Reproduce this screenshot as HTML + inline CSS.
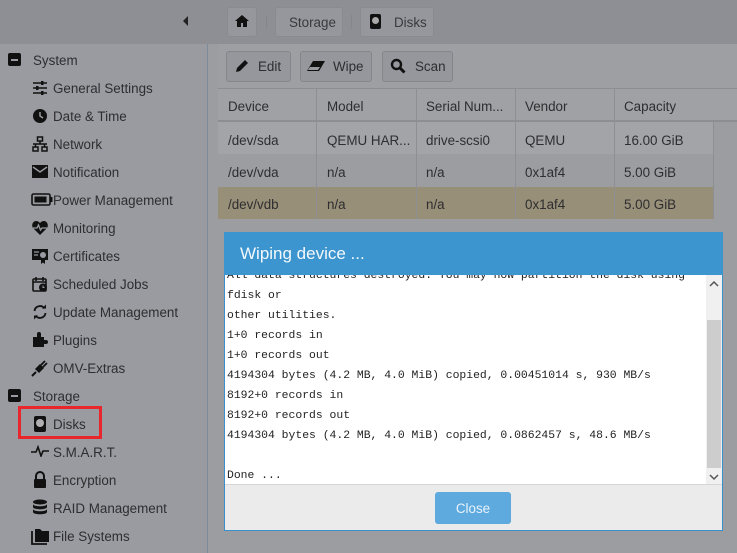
<!DOCTYPE html><html><head><meta charset="utf-8"><style>
*{margin:0;padding:0;box-sizing:border-box}
body{width:737px;height:553px;overflow:hidden;background:#9a9ba0;font-family:"Liberation Sans",sans-serif;font-size:13.4px;color:#2e2e30;position:relative}
.a{position:absolute}
.top{left:0;top:0;width:737px;height:44px;background:#8e8f94}
.side{left:0;top:44px;width:208px;height:509px;background:#9a9ba0;border-right:1px solid #7e8a98}
.it{position:absolute;left:53px;height:20px;line-height:20px;white-space:nowrap;margin-top:1px}
.crumb{top:7px;height:30px;background:#96979c;border:1px solid #8a8b90;border-radius:3px;line-height:30px}
.btn{top:51px;height:31px;background:#96979c;border:1px solid #85868a;border-radius:3px;line-height:30px}
.cell{position:absolute;line-height:20px;white-space:nowrap;margin-top:1px}
.mono{font-family:"Liberation Mono",monospace;font-size:11.4px;color:#222;white-space:pre;position:absolute;left:227px;line-height:20px}
</style></head><body>
<div class="a top"></div>
<div class="a" style="left:183px;top:16px;width:0;height:0;border-top:5px solid transparent;border-bottom:5px solid transparent;border-right:5px solid #222"></div>
<div class="a side"></div>
<div class="a" style="left:208px;top:44px;width:529px;height:509px;background:#9c9da1"></div>
<div class="a crumb" style="left:227px;width:30px"></div>
<svg class="a" style="left:235px;top:14px" width="14" height="14" viewBox="0 0 14 14"><path d="M7 1L0 7h2v6h4V9h2v4h4V7h2z" fill="#111"/></svg>
<div class="a" style="left:266px;top:15px;width:1px;height:14px;background:#85868a"></div>
<div class="a crumb" style="left:275px;width:68px;padding-left:13px;color:#3a3a3c">Storage</div>
<div class="a" style="left:351px;top:15px;width:1px;height:14px;background:#85868a"></div>
<div class="a crumb" style="left:360px;width:74px;padding-left:33px;color:#3a3a3c">Disks</div>
<div class="a" style="left:370px;top:14px;width:11px;height:15px;background:#111;border-radius:2px"></div>
<div class="a" style="left:372px;top:17px;width:7px;height:7px;border-radius:50%;background:#aaa"></div>
<div class="a" style="left:218px;top:44px;width:519px;height:45px;background:#9e9fa3"></div>
<div class="a btn" style="left:226px;width:65px;padding-left:31px">Edit</div>
<svg class="a" style="left:234px;top:58px" width="16" height="16" viewBox="0 0 16 16"><path d="M2 14l1-4 8-8 3 3-8 8z" fill="#111"/></svg>
<div class="a btn" style="left:300px;width:72px;padding-left:32px">Wipe</div>
<svg class="a" style="left:307px;top:60px" width="19" height="12" viewBox="0 0 19 12"><path d="M6 1h12L12 11H0z" fill="#111"/><path d="M3 7h10l-2 3H1z" fill="#9a9ba0"/></svg>
<div class="a btn" style="left:382px;width:71px;padding-left:32px">Scan</div>
<svg class="a" style="left:390px;top:58px" width="16" height="16" viewBox="0 0 16 16"><circle cx="6.5" cy="6.5" r="4.5" fill="none" stroke="#111" stroke-width="2.4"/><path d="M10 10l4.5 4.5" stroke="#111" stroke-width="3"/></svg>
<div class="a" style="left:218px;top:88px;width:519px;height:34px;background:#a0a1a5;border-top:1px solid #8d8e92;border-bottom:2px solid #8d8e92"></div>
<div class="a" style="left:218px;top:122px;width:495px;height:32px;background:#a3a4a8"></div>
<div class="a" style="left:218px;top:154px;width:495px;height:33px;background:#9c9da1"></div>
<div class="a" style="left:218px;top:187px;width:495px;height:32px;background:#988f78"></div>
<div class="a" style="left:316px;top:89px;width:1px;height:130px;background:#8e8f93"></div>
<div class="a" style="left:416px;top:89px;width:1px;height:130px;background:#8e8f93"></div>
<div class="a" style="left:515px;top:89px;width:1px;height:130px;background:#8e8f93"></div>
<div class="a" style="left:614px;top:89px;width:1px;height:130px;background:#8e8f93"></div>
<div class="a" style="left:713px;top:122px;width:1px;height:97px;background:#8e8f93"></div>
<div class="cell" style="left:228px;top:96px">Device</div><div class="cell" style="left:327px;top:96px">Model</div><div class="cell" style="left:426px;top:96px">Serial Num...</div><div class="cell" style="left:525px;top:96px">Vendor</div><div class="cell" style="left:624px;top:96px">Capacity</div>
<div class="cell" style="left:228px;top:130px">/dev/sda</div><div class="cell" style="left:327px;top:130px">QEMU HAR...</div><div class="cell" style="left:426px;top:130px">drive-scsi0</div><div class="cell" style="left:525px;top:130px">QEMU</div><div class="cell" style="left:624px;top:130px">16.00 GiB</div>
<div class="cell" style="left:228px;top:162px">/dev/vda</div><div class="cell" style="left:327px;top:162px">n/a</div><div class="cell" style="left:426px;top:162px">n/a</div><div class="cell" style="left:525px;top:162px">0x1af4</div><div class="cell" style="left:624px;top:162px">5.00 GiB</div>
<div class="cell" style="left:228px;top:194px">/dev/vdb</div><div class="cell" style="left:327px;top:194px">n/a</div><div class="cell" style="left:426px;top:194px">n/a</div><div class="cell" style="left:525px;top:194px">0x1af4</div><div class="cell" style="left:624px;top:194px">5.00 GiB</div>
<div class="a" style="left:8px;top:53px;width:13px;height:13px;background:#111;border-radius:2px"></div><div class="a" style="left:11px;top:59px;width:7px;height:2px;background:#9a9ba0"></div>
<div class="it" style="left:33px;top:50px">System</div>
<div class="it" style="top:78px">General Settings</div>
<div class="it" style="top:106px">Date &amp; Time</div>
<div class="it" style="top:134px">Network</div>
<div class="it" style="top:162px">Notification</div>
<div class="it" style="top:190px">Power Management</div>
<div class="it" style="top:218px">Monitoring</div>
<div class="it" style="top:246px">Certificates</div>
<div class="it" style="top:274px">Scheduled Jobs</div>
<div class="it" style="top:302px">Update Management</div>
<div class="it" style="top:330px">Plugins</div>
<div class="it" style="top:358px">OMV-Extras</div>
<div class="a" style="left:8px;top:389px;width:13px;height:13px;background:#111;border-radius:2px"></div><div class="a" style="left:11px;top:395px;width:7px;height:2px;background:#9a9ba0"></div>
<div class="it" style="left:33px;top:386px">Storage</div>
<div class="it" style="top:414px">Disks</div>
<div class="it" style="top:442px">S.M.A.R.T.</div>
<div class="it" style="top:470px">Encryption</div>
<div class="it" style="top:498px">RAID Management</div>
<div class="it" style="top:526px">File Systems</div>
<div class="a" style="left:18px;top:406px;width:84px;height:33px;border:3px solid #e8262c"></div>
<svg class="a" style="left:32px;top:80px" width="16" height="16" viewBox="0 0 16 16"><path d="M1 3h14M1 8h14M1 13h14" stroke="#111" stroke-width="1.5"/><rect x="9" y="1" width="2.5" height="4" fill="#111"/><rect x="4" y="6" width="2.5" height="4" fill="#111"/><rect x="9" y="11" width="2.5" height="4" fill="#111"/></svg>
<svg class="a" style="left:32px;top:108px" width="16" height="16" viewBox="0 0 16 16"><circle cx="8" cy="8" r="7" fill="#111"/><path d="M8 4v4l3 2" stroke="#9a9ba0" stroke-width="1.5" fill="none"/></svg>
<svg class="a" style="left:32px;top:136px" width="16" height="16" viewBox="0 0 16 16"><rect x="5.5" y="1" width="5" height="4" fill="none" stroke="#111" stroke-width="1.5"/><path d="M8 5v3M1 8h14M3.5 8v3M12.5 8v3" stroke="#111" stroke-width="1.5"/><rect x="1" y="11" width="5" height="4" fill="none" stroke="#111" stroke-width="1.5"/><rect x="10" y="11" width="5" height="4" fill="none" stroke="#111" stroke-width="1.5"/></svg>
<svg class="a" style="left:32px;top:165px" width="16" height="13" viewBox="0 0 16 13"><rect width="16" height="13" fill="#111"/><path d="M1 2l7 5 7-5" stroke="#9a9ba0" stroke-width="1.5" fill="none"/></svg>
<svg class="a" style="left:31px;top:193px" width="22" height="13" viewBox="0 0 22 13"><rect x="1" y="1" width="18" height="11" rx="1.5" fill="none" stroke="#111" stroke-width="1.6"/><rect x="3.5" y="3.5" width="12" height="6" fill="#111"/><rect x="19.5" y="4" width="2" height="5" fill="#111"/></svg>
<svg class="a" style="left:32px;top:220px" width="16" height="15" viewBox="0 0 16 15"><path d="M8 15L1 8C-1 5 1 1 4 1c2 0 3 1 4 2 1-1 2-2 4-2 3 0 5 4 3 7z" fill="#111"/><path d="M1 8h4l1.5-3 2 5 1.5-2h5" stroke="#9a9ba0" stroke-width="1.3" fill="none"/></svg>
<svg class="a" style="left:32px;top:248px" width="16" height="16" viewBox="0 0 16 16"><rect x="0" y="1" width="16" height="11" fill="#111"/><circle cx="11" cy="7" r="3" fill="#9a9ba0"/><path d="M2 4h5M2 7h4" stroke="#9a9ba0" stroke-width="1.2"/><path d="M9 11v5l2-1.5 2 1.5v-5" fill="#111"/></svg>
<svg class="a" style="left:32px;top:276px" width="16" height="16" viewBox="0 0 16 16"><rect x="1" y="3" width="13" height="12" rx="1" fill="none" stroke="#111" stroke-width="1.6"/><path d="M1 6h13M4 1v4M11 1v4" stroke="#111" stroke-width="1.6"/><circle cx="11" cy="11.5" r="4" fill="#111"/><path d="M11 9.5v2h1.5" stroke="#9a9ba0" stroke-width="1" fill="none"/></svg>
<svg class="a" style="left:32px;top:304px" width="16" height="16" viewBox="0 0 16 16"><path d="M2.5 7A5.5 5.5 0 0 1 12.5 4.5M13.5 9A5.5 5.5 0 0 1 3.5 11.5" stroke="#111" stroke-width="1.8" fill="none"/><path d="M10 4.5h4v-4zM6 11.5H2v4z" fill="#111"/></svg>
<svg class="a" style="left:32px;top:332px" width="16" height="16" viewBox="0 0 16 16"><path d="M1 5h4V2a2 2 0 0 1 4 0v3h3v3h2a2 2 0 0 1 0 4h-2v3H1z" fill="#111"/></svg>
<svg class="a" style="left:31px;top:359px" width="18" height="18" viewBox="0 0 18 18"><path d="M1 17l4-4" stroke="#111" stroke-width="2"/><path d="M4 10l4 4 5-5-4-4z" fill="#111"/><path d="M10 6l4-4M12 8l4-4" stroke="#111" stroke-width="1.8"/></svg>
<div class="a" style="left:34px;top:416px;width:12px;height:16px;background:#111;border-radius:2px"></div><div class="a" style="left:36px;top:419px;width:8px;height:8px;border-radius:50%;background:#b0b0b2"></div>
<svg class="a" style="left:31px;top:445px" width="18" height="12" viewBox="0 0 18 12"><path d="M0 7h5l2-5 3 9 2-5h6" stroke="#111" stroke-width="1.6" fill="none"/></svg>
<svg class="a" style="left:33px;top:471px" width="14" height="17" viewBox="0 0 14 17"><path d="M3 8V5a4 4 0 0 1 8 0v3" stroke="#111" stroke-width="2" fill="none"/><rect x="1" y="8" width="12" height="9" rx="1" fill="#111"/></svg>
<svg class="a" style="left:32px;top:499px" width="16" height="17" viewBox="0 0 16 17"><ellipse cx="8" cy="3" rx="7" ry="2.5" fill="#111"/><path d="M1 5c0 3 14 3 14 0v3c0 3-14 3-14 0zM1 10c0 3 14 3 14 0v3c0 3-14 3-14 0z" fill="#111"/></svg>
<svg class="a" style="left:31px;top:528px" width="19" height="17" viewBox="0 0 19 17"><path d="M1 3v13h15" stroke="#111" stroke-width="1.8" fill="none"/><path d="M4 1h5l2 2h7v11H4z" fill="#111"/></svg>
<div class="a" style="left:224px;top:232px;width:499px;height:299px;background:#fff;border:1px solid #3a8fcc"></div>
<div class="a" style="left:224px;top:232px;width:499px;height:43px;background:#3c95ce;color:#f3f8fc;font-size:17px;line-height:44px;padding-left:16px">Wiping device ...</div>
<div class="a" style="left:225px;top:275px;width:481px;height:210px;overflow:hidden">
<div class="mono" style="left:2px;top:-9px">All data structures destroyed. You may now partition the disk using</div>
<div class="mono" style="left:2px;top:11px">fdisk or</div>
<div class="mono" style="left:2px;top:31px">other utilities.</div>
<div class="mono" style="left:2px;top:51px">1+0 records in</div>
<div class="mono" style="left:2px;top:71px">1+0 records out</div>
<div class="mono" style="left:2px;top:91px">4194304 bytes (4.2 MB, 4.0 MiB) copied, 0.00451014 s, 930 MB/s</div>
<div class="mono" style="left:2px;top:111px">8192+0 records in</div>
<div class="mono" style="left:2px;top:131px">8192+0 records out</div>
<div class="mono" style="left:2px;top:151px">4194304 bytes (4.2 MB, 4.0 MiB) copied, 0.0862457 s, 48.6 MB/s</div>
<div class="mono" style="left:2px;top:191px">Done ...</div>
</div>
<div class="a" style="left:706px;top:275px;width:16px;height:210px;background:#f0f0f0"></div>
<div class="a" style="left:707px;top:320px;width:14px;height:148px;background:#cdcdcd"></div>
<svg class="a" style="left:709px;top:280px" width="10" height="8" viewBox="0 0 10 8"><path d="M1 6l4-4 4 4" stroke="#555" stroke-width="1.5" fill="none"/></svg>
<svg class="a" style="left:709px;top:473px" width="10" height="8" viewBox="0 0 10 8"><path d="M1 2l4 4 4-4" stroke="#555" stroke-width="1.5" fill="none"/></svg>
<div class="a" style="left:225px;top:484px;width:497px;height:46px;background:#ebebeb;border-top:1px solid #d5d5d5"></div>
<div class="a" style="left:435px;top:492px;width:76px;height:32px;background:#5eaade;border-radius:3px;color:#e8f3fb;text-align:center;line-height:33px">Close</div>
</body></html>
